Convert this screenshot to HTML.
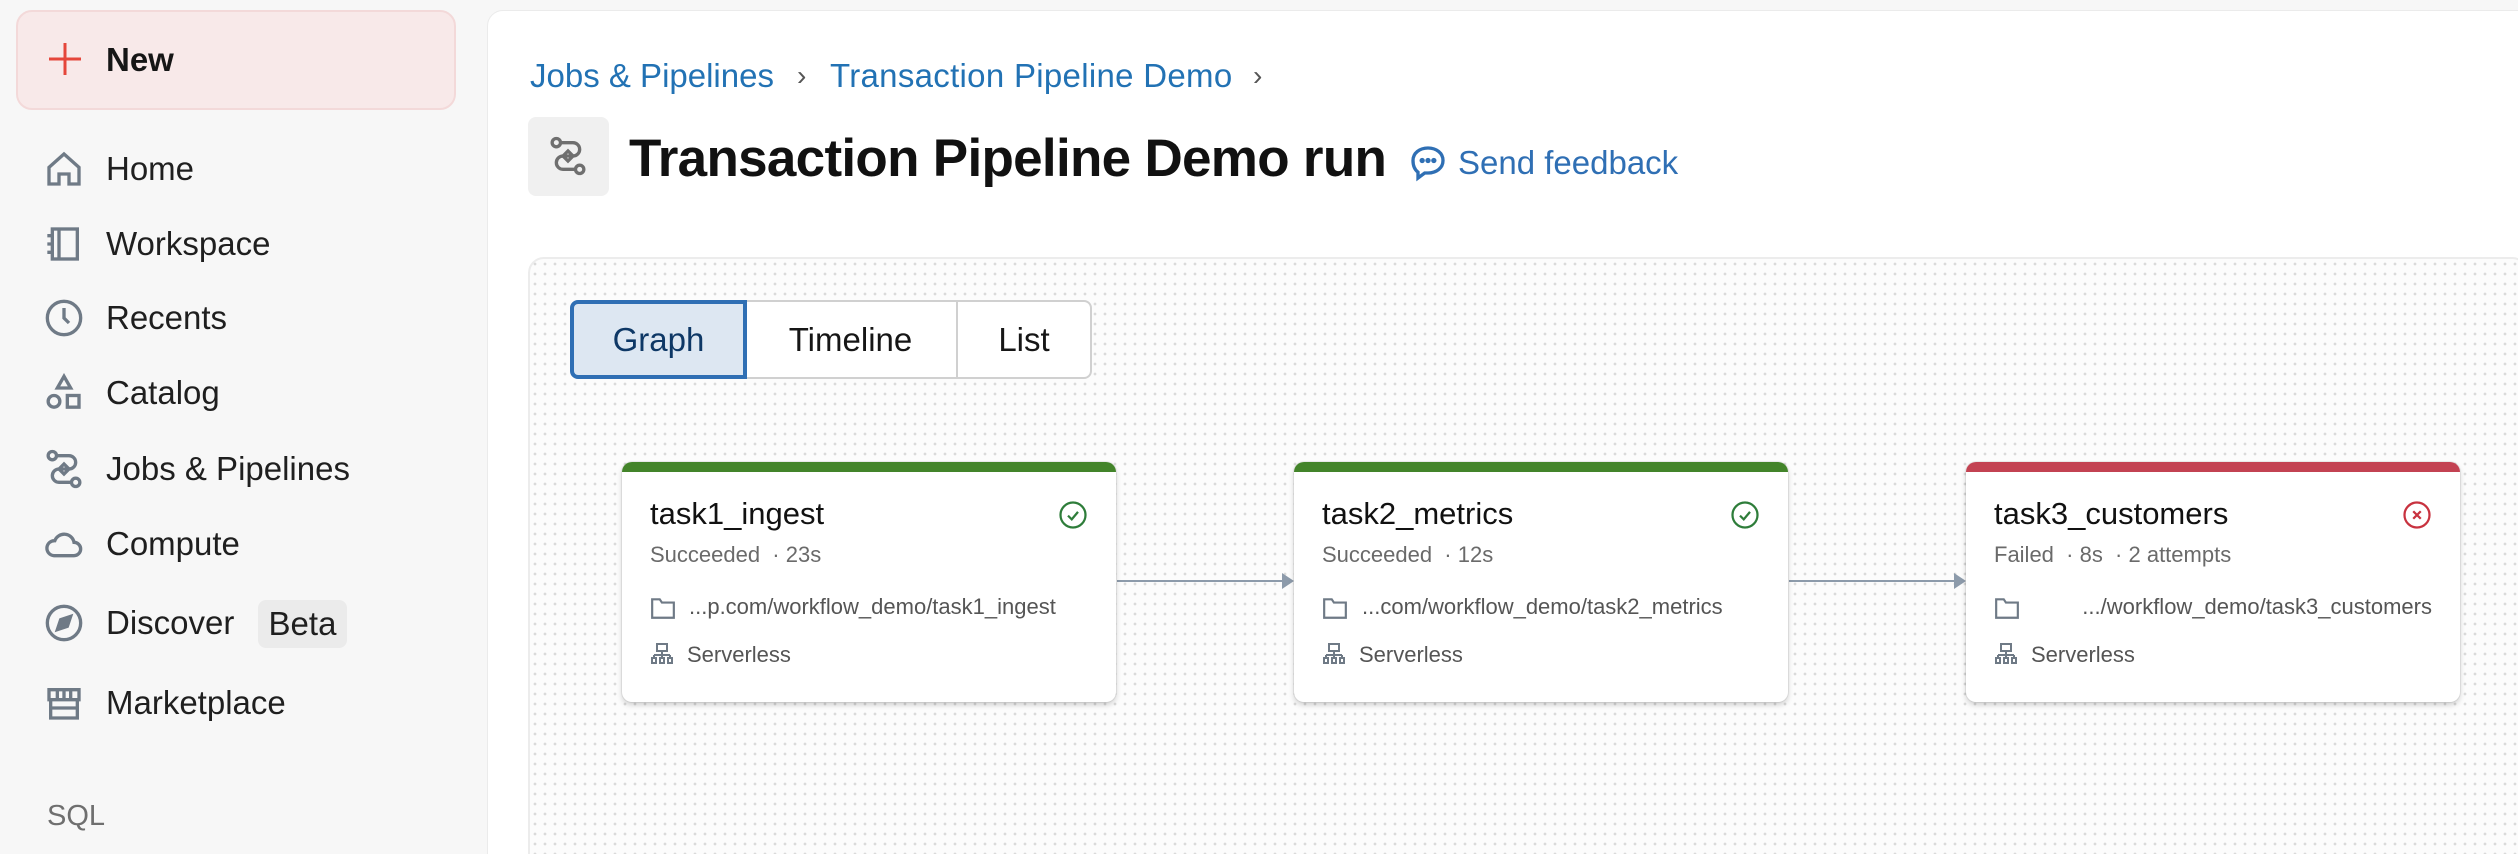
<!DOCTYPE html>
<html><head><meta charset="utf-8"><style>
*{box-sizing:border-box;margin:0;padding:0}
html,body{width:2518px;height:854px;overflow:hidden}
body{background:#f7f7f7;font-family:"Liberation Sans",Arial,sans-serif;position:relative;color:#161616}
.abs{position:absolute}
.new{left:16px;top:10px;width:440px;height:100px;background:#f8e9e9;border:2px solid #f3d9d9;border-radius:16px}
.nav{left:0;height:50px;width:480px;display:flex;align-items:center;font-size:33px;color:#1f1f1f}
.nav svg{position:absolute;left:44px;width:40px;height:40px}
.nav span{position:absolute;left:106px}
.main{left:487px;top:10px;width:2040px;height:860px;background:#fff;border-radius:16px 0 0 0;border:1px solid #ebebeb}
.bc{top:57px;font-size:33px;color:#2272b4}
.panel{left:528px;top:257px;width:2000px;height:620px;border:2px solid #ececec;border-radius:16px;background-color:#fcfcfc;background-image:radial-gradient(circle,#dadada 1.2px,transparent 1.6px);background-size:10px 10px}
.tab{top:300px;height:79px;display:flex;align-items:center;justify-content:center;font-size:33px;background:#fff;border:2px solid #d0d0d0}
.card{top:462px;width:494px;height:240px;background:#fff;border-radius:10px;box-shadow:0 3px 6px rgba(0,0,0,.18),0 0 0 1px rgba(0,0,0,.06);overflow:hidden}
.card .bar{position:absolute;left:0;top:0;right:0;height:10px}
.card .t{position:absolute;left:28px;top:34px;font-size:31px;color:#111}
.card .s{position:absolute;left:28px;top:80px;font-size:22px;color:#6a6a6a;white-space:pre}
.card .p{position:absolute;top:132px;font-size:22px;color:#555;white-space:nowrap}
.card .v{position:absolute;left:65px;top:180px;font-size:22px;color:#555}
.card svg.fi{position:absolute;left:28px;top:134px;width:26px;height:24px}
.card svg.si{position:absolute;left:28px;top:180px;width:24px;height:24px}
.card svg.st{position:absolute;right:28px;top:38px;width:30px;height:30px}
.arrow{top:580px;height:2px;background:#8d9bab}
.arrow:after{content:"";position:absolute;right:-2px;top:-7px;border-left:12px solid #8d9bab;border-top:8px solid transparent;border-bottom:8px solid transparent}
</style></head><body>
<div class="abs new"></div>
<svg class="abs" style="left:48px;top:42px" width="34" height="34" viewBox="0 0 34 34"><path d="M17 1v32M1 17h32" stroke="#e5463b" stroke-width="3"/></svg>
<div class="abs" style="left:106px;top:41px;font-size:33px;font-weight:bold;color:#161616">New</div>

<div class="abs nav" style="top:144px"><svg viewBox="0 0 24 24" fill="none" stroke="#6f7a86" stroke-width="2"><path d="M3 11l9-8 9 8v10h-6v-6h-6v6H3z"/></svg><span>Home</span></div>
<div class="abs nav" style="top:219px"><svg viewBox="0 0 24 24" fill="none" stroke="#6f7a86" stroke-width="2"><rect x="5" y="3" width="15" height="18"/><path d="M9 3v18M2 7h4M2 12h4M2 17h4"/></svg><span>Workspace</span></div>
<div class="abs nav" style="top:293px"><svg viewBox="0 0 24 24" fill="none" stroke="#6f7a86" stroke-width="2"><circle cx="12" cy="12" r="10"/><path d="M12 6v6l3 3"/></svg><span>Recents</span></div>
<div class="abs nav" style="top:368px"><svg viewBox="0 0 24 24" fill="none" stroke="#6f7a86" stroke-width="2"><path d="M12 2l4 7H8z"/><circle cx="6" cy="17" r="3.5"/><rect x="14" y="13.5" width="7" height="7"/></svg><span>Catalog</span></div>
<div class="abs nav" style="top:444px"><svg viewBox="0 0 24 24" fill="none" stroke="#6f7a86" stroke-width="2"><circle cx="5" cy="4" r="2.5"/><circle cx="19" cy="20" r="2.5"/><path d="M7.5 4H15a4 4 0 010 8H9a4 4 0 000 8h7.5"/><path d="M9 12l3-3 3 3-3 3z"/></svg><span>Jobs &amp; Pipelines</span></div>
<div class="abs nav" style="top:519px"><svg viewBox="0 0 24 24" fill="none" stroke="#6f7a86" stroke-width="2"><path d="M6 19h12a4 4 0 000-8 6 6 0 00-11.5-1A4.5 4.5 0 006 19z"/></svg><span>Compute</span></div>
<div class="abs nav" style="top:598px"><svg viewBox="0 0 24 24" fill="none" stroke="#6f7a86" stroke-width="2"><circle cx="12" cy="12" r="10"/><path d="M16 8l-2 6-6 2 2-6z" fill="#6f7a86"/></svg><span>Discover</span></div>
<div class="abs" style="left:258px;top:600px;width:89px;height:48px;background:#ebebeb;border-radius:8px;font-size:33px;color:#1f1f1f;line-height:48px;text-align:center">Beta</div>
<div class="abs nav" style="top:678px"><svg viewBox="0 0 24 24" fill="none" stroke="#6f7a86" stroke-width="2"><path d="M3 4h18v6H3zM4 10v11h16V10M8 4v6M12 4v6M16 4v6M4 15h16"/></svg><span>Marketplace</span></div>
<div class="abs" style="left:47px;top:800px;font-size:29px;color:#6f6f6f">SQL</div>

<div class="abs main"></div>
<div class="abs bc" style="left:530px">Jobs &amp; Pipelines</div>
<div class="abs bc" style="left:797px;color:#555;font-size:28px;top:60px">›</div>
<div class="abs bc" style="left:830px;letter-spacing:0.3px">Transaction Pipeline Demo</div>
<div class="abs bc" style="left:1253px;color:#555;font-size:28px;top:60px">›</div>
<div class="abs" style="left:528px;top:117px;width:81px;height:79px;background:#f0f0f0;border-radius:8px"></div>
<svg class="abs" style="left:548px;top:136px" width="40" height="40" viewBox="0 0 24 24" fill="none" stroke="#6f6f6f" stroke-width="2"><circle cx="5" cy="4" r="2.5"/><circle cx="19" cy="20" r="2.5"/><path d="M7.5 4H15a4 4 0 010 8H9a4 4 0 000 8h7.5"/><path d="M9 12l3-3 3 3-3 3z"/></svg>
<div class="abs" style="left:629px;top:128px;font-size:53px;font-weight:bold;color:#111;letter-spacing:-0.7px">Transaction Pipeline Demo run</div>
<svg class="abs" style="left:1407px;top:143px" width="42" height="40" viewBox="0 0 24 24" fill="none" stroke="#2f6fb4" stroke-width="2"><path d="M12 3c5 0 9 3 9 7.5S17 18 12 18h-2l-4 3v-3.5C4 16 3 13.5 3 10.5 3 6 7 3 12 3z"/><circle cx="8.5" cy="10.5" r=".6" fill="#2f6fb4"/><circle cx="12" cy="10.5" r=".6" fill="#2f6fb4"/><circle cx="15.5" cy="10.5" r=".6" fill="#2f6fb4"/></svg>
<div class="abs" style="left:1458px;top:144px;font-size:33px;color:#2f6fb4">Send feedback</div>

<div class="abs panel"></div>
<div class="abs tab" style="left:745px;width:213px;border-left:none">Timeline</div>
<div class="abs tab" style="left:956px;width:136px;border-radius:0 8px 8px 0">List</div>
<div class="abs tab" style="left:570px;width:177px;background:#dde7f2;border:4px solid #2f6fb4;border-radius:8px 0 0 8px;color:#0e3866">Graph</div>

<div class="abs arrow" style="left:1117px;width:175px"></div>
<div class="abs arrow" style="left:1789px;width:175px"></div>

<div class="abs card" style="left:622px"><div class="bar" style="background:#43842a"></div>
<div class="t">task1_ingest</div>
<svg class="st" viewBox="0 0 24 24" fill="none" stroke="#2e7d3a" stroke-width="1.8"><circle cx="12" cy="12" r="10"/><path d="M8 12.5l3 3 5-6"/></svg>
<div class="s">Succeeded  · 23s</div>
<svg class="fi" viewBox="0 0 24 22" fill="none" stroke="#6f7a86" stroke-width="2"><path d="M2 3h7l2 3h11v14H2z"/></svg>
<div class="p" style="left:67px">...p.com/workflow_demo/task1_ingest</div>
<svg class="si" viewBox="0 0 24 24" fill="none" stroke="#6f7a86" stroke-width="2"><rect x="7" y="2" width="10" height="7"/><path d="M12 9v4M4 13h16M4 13v3M12 13v3M20 13v3"/><rect x="2" y="16" width="4" height="5"/><rect x="10" y="16" width="4" height="5"/><rect x="18" y="16" width="4" height="5"/></svg>
<div class="v">Serverless</div></div>

<div class="abs card" style="left:1294px"><div class="bar" style="background:#43842a"></div>
<div class="t">task2_metrics</div>
<svg class="st" viewBox="0 0 24 24" fill="none" stroke="#2e7d3a" stroke-width="1.8"><circle cx="12" cy="12" r="10"/><path d="M8 12.5l3 3 5-6"/></svg>
<div class="s">Succeeded  · 12s</div>
<svg class="fi" viewBox="0 0 24 22" fill="none" stroke="#6f7a86" stroke-width="2"><path d="M2 3h7l2 3h11v14H2z"/></svg>
<div class="p" style="left:68px">...com/workflow_demo/task2_metrics</div>
<svg class="si" viewBox="0 0 24 24" fill="none" stroke="#6f7a86" stroke-width="2"><rect x="7" y="2" width="10" height="7"/><path d="M12 9v4M4 13h16M4 13v3M12 13v3M20 13v3"/><rect x="2" y="16" width="4" height="5"/><rect x="10" y="16" width="4" height="5"/><rect x="18" y="16" width="4" height="5"/></svg>
<div class="v">Serverless</div></div>

<div class="abs card" style="left:1966px"><div class="bar" style="background:#c34252"></div>
<div class="t">task3_customers</div>
<svg class="st" viewBox="0 0 24 24" fill="none" stroke="#c8323f" stroke-width="1.8"><circle cx="12" cy="12" r="10"/><path d="M9 9l6 6M15 9l-6 6"/></svg>
<div class="s">Failed  · 8s  · 2 attempts</div>
<svg class="fi" viewBox="0 0 24 22" fill="none" stroke="#6f7a86" stroke-width="2"><path d="M2 3h7l2 3h11v14H2z"/></svg>
<div class="p" style="right:28px">.../workflow_demo/task3_customers</div>
<svg class="si" viewBox="0 0 24 24" fill="none" stroke="#6f7a86" stroke-width="2"><rect x="7" y="2" width="10" height="7"/><path d="M12 9v4M4 13h16M4 13v3M12 13v3M20 13v3"/><rect x="2" y="16" width="4" height="5"/><rect x="10" y="16" width="4" height="5"/><rect x="18" y="16" width="4" height="5"/></svg>
<div class="v">Serverless</div></div>
</body></html>
